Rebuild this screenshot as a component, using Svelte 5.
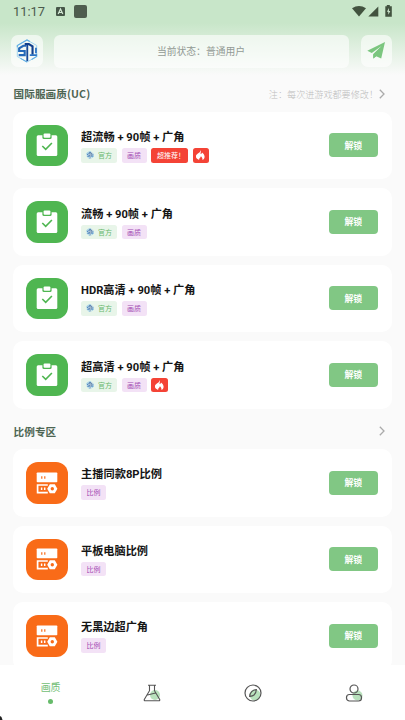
<script>
  const sections = [
    {
      title: '国际服画质(UC)',
      note: '注：每次进游戏都要修改！',
      kind: 'clip',
      items: [
        { name: '超流畅 + 90帧 + 广角', width: 103.5, tags: ['official', 'quality', 'hot', 'fire'] },
        { name: '流畅 + 90帧 + 广角', width: 92, tags: ['official', 'quality'] },
        { name: 'HDR高清 + 90帧 + 广角', width: 114.5, tags: ['official', 'quality'] },
        { name: '超高清 + 90帧 + 广角', width: 103.5, tags: ['official', 'quality', 'fire'] }
      ]
    },
    {
      title: '比例专区',
      note: '',
      kind: 'server',
      items: [
        { name: '主播同款8P比例', width: 81, tags: ['ratio'] },
        { name: '平板电脑比例', width: 67, tags: ['ratio'] },
        { name: '无黑边超广角', width: 67, tags: ['ratio'] }
      ]
    }
  ];
  const labels = { official: '官方', quality: '画质', hot: '超推荐！', ratio: '比例' };
</script>

{#snippet logo(size)}
  <svg width={size} height={size} viewBox="0 0 24 26" fill="none">
    <path d="M12 1 22.500 7v12L12 25 1.500 19V7Z" stroke="#9bd0f0" stroke-width="1" />
    <path d="M1.500 9V7L12 1l3 1.700M12 25l-7-4M22.500 16v3L17 22.200" stroke="#62afe4" stroke-width="1.200" />
    <path d="M11 7.300H8L3.500 10v3H9.500v4.500H3" stroke="#2468b8" stroke-width="2.300" />
    <path d="M12.300 5v19" stroke="#174a99" stroke-width="2" />
    <path d="M9.500 5.500h4.500l4 2.500v9" stroke="#103f8d" stroke-width="2.300" />
    <path d="M15 17.500h7.500M21.700 9.500v6" stroke="#2b73c3" stroke-width="1.900" />
  </svg>
{/snippet}

<main>
  <header>
    <div class="status">
      <span class="time">11:17</span>
      <svg class="abox" width="9" height="9" viewBox="0 0 9 9">
        <rect width="9" height="9" rx="1" fill="#465748" />
        <path d="M2.200 7 4.500 2 6.800 7M3 5.500h3" fill="none" stroke="#d5ead6" stroke-width="1.200" />
      </svg>
      <span class="square"></span>
      <svg class="signals" width="41" height="12" viewBox="0 0 41 12" fill="#42533f">
        <path d="M0 3.200Q7 -1.400 14 3.200L7 11.500Z" />
        <path d="M26.300 1.500V11.500H16.300Z" />
        <path d="M34.800 1.300V0h3v1.300H39.800V11.700h-6.500V1.300Z" />
        <path d="M37 3 34.900 6.700h1.400v3l2-3.800h-1.400Z" fill="#d0e9d1" />
      </svg>
    </div>
    <div class="bar">
      <div class="tile">{@render logo(24)}</div>
      <div class="state">当前状态：普通用户</div>
      <div class="tile">
        <svg width="18" height="18" viewBox="0 0 18 18" fill="#7bc67f">
          <path d="M18 0 .3 8.800 4.800 11 14.500 4 6.300 12V16.800L9.200 14.200 14.200 16.500Z" />
          <path d="M6.300 12.500 13.500 5.500 9.200 14.200 6.300 16Z" />
        </svg>
      </div>
    </div>
  </header>

  <div class="content">
    {#each sections as section}
      <section>
        <div class="heading">
          <h2>{section.title}</h2>
          <span class="note">{section.note}</span>
          <svg width="6" height="10" viewBox="0 0 6 10" fill="none" stroke="#aaa" stroke-width="1.300"><path d="m.8.800 4.200 4.200-4.200 4.200" /></svg>
        </div>
        <div class="cards">
          {#each section.items as item}
            <article>
              <div class="icon {section.kind}">
                {#if section.kind === 'clip'}
                  <svg width="22" height="24" viewBox="0 0 22 24">
                    <rect x=".7" y="2.200" width="20.600" height="20.800" rx="1.500" fill="#fff" />
                    <rect x="6.400" y=".2" width="9.200" height="5.800" rx="1.500" fill="#4fb651" />
                    <rect x="7.600" y=".6" width="6.800" height="4.200" rx="1" fill="#fff" />
                    <path d="m6.300 13 3.400 3.400 6.200-6.400" fill="none" stroke="#4fb651" stroke-width="1.600" />
                  </svg>
                {:else}
                  <svg width="22" height="22" viewBox="0 0 22 22">
                    <rect x=".7" y=".5" width="20.600" height="9.800" rx=".8" fill="#fff" />
                    <path d="M5.800 4.200v2.600M8.800 4.200v2.600" stroke="#f96b18" stroke-width="1.200" />
                    <path d="M11.800 13H1.600v7.600H11.800" fill="none" stroke="#fff" stroke-width="1.700" />
                    <path d="M5.600 15.500v2.600M8.700 15.500v2.600" stroke="#fff" stroke-width="1.500" />
                    <path d="M13.800 12.200h5l2.600 4.500-2.600 4.500h-5l-2.600-4.500Z" fill="#fff" />
                    <circle cx="16.300" cy="16.700" r="1.700" fill="#f96b18" />
                  </svg>
                {/if}
              </div>
              <div class="info">
                <svg class="name" width={item.width + 4} height="18">
                  <text x="0" y="13.500" textLength={item.width} lengthAdjust="spacingAndGlyphs">{item.name}</text>
                </svg>
                <div class="tags">
                  {#each item.tags as tag}
                    <span class="tag {tag}">
                      {#if tag === 'official'}{@render logo(8)}{/if}
                      {#if tag === 'fire'}
                        <svg width="9" height="10" viewBox="0 0 9 10">
                          <path d="M4.700 0C5.500 2 4.200 2.700 4.600 4 5.700 3.800 6 3 6 2.400 9.500 5 9.300 8.500 6.400 10 6.700 8 5.600 7.200 4.900 6.300 4.500 8 2.800 8.200 3.200 10-1.600 8-.5 4.800 1.900 3.400 3.600 2.400 4.700 1.500 4.700 0Z" fill="#fff" />
                        </svg>
                      {:else}{labels[tag]}{/if}
                    </span>
                  {/each}
                </div>
              </div>
              <button>解锁</button>
            </article>
          {/each}
        </div>
      </section>
    {/each}
  </div>

  <nav>
    <div class="active"><span>画质</span><i></i></div>
    <div>
      <svg width="18" height="18" viewBox="0 0 18 18" fill="none" stroke="#555" stroke-width="1.100">
        <circle cx="12" cy="11" r="5" fill="#b9e2bd" stroke="none" />
        <path d="M5 1.200h8M6.500 1.200v5.500L1.300 15.500q-.4 1.200.8 1.200h13.800q1.200 0 .8-1.200L11.500 6.700V1.200M4.500 11l4-1 4-1" />
      </svg>
    </div>
    <div>
      <svg width="18" height="18" viewBox="0 0 18 18" fill="none" stroke="#555" stroke-width="1.200">
        <circle cx="11" cy="11" r="5.500" fill="#b9e2bd" stroke="none" />
        <circle cx="9" cy="9" r="8" />
        <path d="M12.300 5.700q-.2 3-2 5-1.800 1.700-4.600 1.600.1-2.600 2-4.600 1.800-1.800 4.600-2Z" />
      </svg>
    </div>
    <div>
      <svg width="18" height="18" viewBox="0 0 18 18" fill="none" stroke="#555" stroke-width="1.200">
        <circle cx="12.500" cy="11.500" r="5" fill="#b9e2bd" stroke="none" />
        <circle cx="9" cy="5" r="4" />
        <rect x="1.500" y="10.500" width="15" height="6.500" rx="3" />
      </svg>
    </div>
    <svg class="corner" width="3" height="4" viewBox="0 0 3 4"><path d="M0 0 1.500 1 2.500 4H0Z" fill="#222" /></svg>
  </nav>
</main>

<style>
  :global(body) { margin: 0; overflow: hidden; }
  main {
    width: 405px;
    height: 720px;
    overflow: hidden;
    display: flex;
    flex-direction: column;
    background: #fafafa;
    font-family: Roboto, 'Noto Sans CJK SC', sans-serif;
  }
  header {
    height: 76px;
    flex: none;
    background: linear-gradient(#c8e6c9 0, #c8e6c9 23px, #fafafa 75px);
  }
  .status {
    box-sizing: border-box;
    height: 35px;
    padding: 0 12px 12px 13px;
    display: flex;
    align-items: center;
    color: #4b5a4c;
  }
  .time { width: 43px; font-size: 12.800px; }
  .square { width: 13px; height: 13px; margin-left: 9px; border-radius: 2px; background: #4e5d4e; }
  .signals { margin-left: auto; margin-top: -2px; }
  .bar { display: flex; padding: 0 13px 0 11px; gap: 11.500px; }
  .tile {
    width: 31.500px;
    height: 31.500px;
    display: flex;
    align-items: center;
    justify-content: center;
    border-radius: 7px;
    background: rgba(255, 255, 255, .6);
  }
  .state {
    flex: 1;
    border-radius: 6px;
    background: rgba(255, 255, 255, .6);
    color: #929994;
    text-align: center;
    text-indent: -1px;
    font-size: 9.800px;
    line-height: 33px;
  }
  .content { height: 589px; flex: none; overflow: hidden; }
  section + section { margin-top: 5px; }
  .heading {
    height: 35.500px;
    display: flex;
    align-items: center;
    padding: 0 20px 0 13.500px;
  }
  h2 { margin: 1px 0 0; font-size: 10.600px; line-height: 16px; color: #4d6553; font-weight: 700; font-family: 'Noto Sans CJK SC', sans-serif; letter-spacing: .1px; }
  .heading svg { margin-left: 5px; }
  .note { margin-left: auto; font-size: 9.100px; color: #bdbdbd; font-weight: 300; margin-right: -4px; }
  .note:empty { margin-right: 0; }
  .cards { display: flex; flex-direction: column; gap: 9px; padding: 0 13.500px 0 13px; }
  article {
    box-sizing: border-box;
    height: 67.500px;
    padding: 0 13.500px 0 13px;
    display: flex;
    align-items: center;
    border-radius: 10px;
    background: #fff;
  }
  .icon {
    width: 42px;
    height: 41.500px;
    border-radius: 12px;
    display: flex;
    align-items: center;
    justify-content: center;
  }
  .clip { background: #4fb651; }
  .server { background: #f96b18; }
  .info { flex: 1; margin-left: 13px; margin-top: -1px; }
  .name { display: block; font-size: 11.500px; font-weight: 700; fill: #151515; }
  .tags { display: flex; gap: 4.500px; margin-top: 3px; }
  .server + .info { margin-top: -2px; }
  .tag {
    box-sizing: border-box;
    height: 14.500px;
    display: flex;
    align-items: center;
    justify-content: center;
    border-radius: 2.500px;
    font-size: 7px;
    white-space: nowrap;
  }
  .official { width: 36px; gap: 4px; background: #e8f5e9; color: #67b86b; }
  .quality, .ratio { width: 25px; background: #f3e2f6; color: #a34bb3; }
  .hot { width: 37px; padding-left: 3px; background: #f44336; color: #fff; }
  .fire { width: 16.500px; background: #f44336; }
  button {
    width: 49.500px;
    height: 24px;
    padding: 0;
    border: 0;
    border-radius: 4px;
    background: #81c784;
    color: #fff;
    font: 700 8.800px 'Noto Sans CJK SC', sans-serif;
  }
  nav { position: relative; height: 55px; flex: none; display: flex; background: #fff; }
  nav div { flex: 1; display: flex; align-items: center; justify-content: center; }
  nav .active { flex-direction: column; color: #72be76; font-size: 10px; line-height: 13px; }
  i { width: 5px; height: 5px; margin-top: 5px; border-radius: 50%; background: #66bb6a; }
  .corner { position: absolute; left: 0; bottom: 0; }
</style>
